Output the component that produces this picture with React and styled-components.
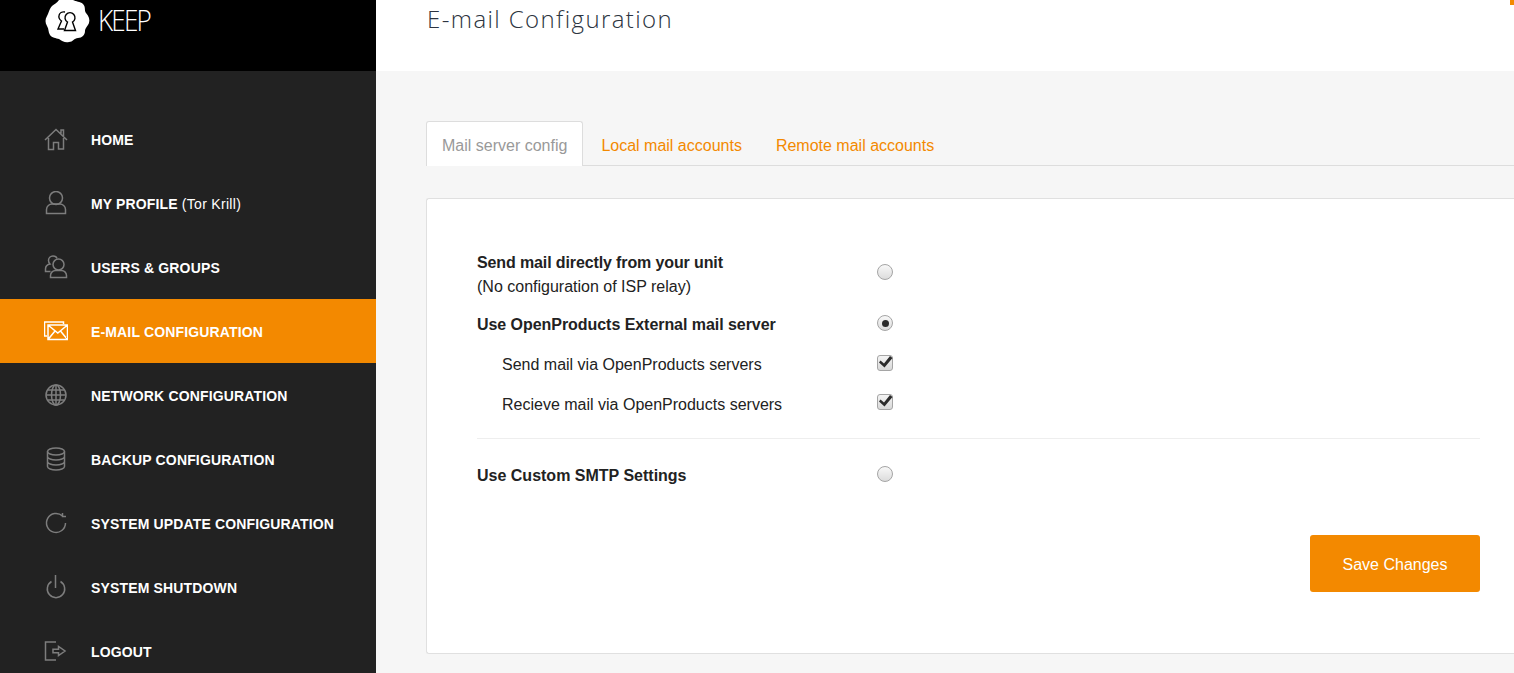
import React from "react";
import styled, { createGlobalStyle } from "styled-components";

const GlobalStyle = createGlobalStyle`
  html, body {
    margin: 0;
    padding: 0;
    height: 100%;
    overflow: hidden;
    background: #f6f6f6;
    font-family: "Liberation Sans", Arial, sans-serif;
  }
`;

const Page = styled.div`
  display: flex;
  width: 1514px;
  height: 673px;
  overflow: hidden;
  position: relative;
`;

const Sidebar = styled.aside`
  width: 376px;
  flex: none;
  background: #222222;
  display: flex;
  flex-direction: column;
`;

const Brand = styled.div`
  height: 71px;
  flex: none;
  background: #000;
  display: flex;
  align-items: flex-start;
  padding-left: 45px;
  gap: 8px;
  overflow: hidden;
`;

const BrandName = styled.span`
  font-family: "Open Sans", sans-serif;
  font-weight: 300;
  font-size: 29px;
  line-height: 40px;
  letter-spacing: -2px;
  color: #fff;
  transform: scaleX(0.9);
  transform-origin: left center;
`;

const Nav = styled.nav`
  padding-top: 36px;
  display: flex;
  flex-direction: column;
`;

const NavItem = styled.a`
  height: 64px;
  display: flex;
  align-items: center;
  padding-left: 44px;
  gap: 23px;
  font-size: 14px;
  font-weight: 700;
  color: #fff;
  background: ${(p) => (p.$active ? "#f38900" : "transparent")};
  svg {
    flex: none;
    fill: none;
    stroke: ${(p) => (p.$active ? "#fff" : "#7d7d7d")};
    stroke-width: 1.5;
  }
`;

const NavLabel = styled.span`
  padding-top: 2px;
  letter-spacing: 0.15px;
`;

const NavNote = styled.span`
  font-weight: 400;
  letter-spacing: 0.3px;
`;

const Main = styled.main`
  flex: 1;
  min-width: 0;
  display: flex;
  flex-direction: column;
`;

const Header = styled.header`
  height: 71px;
  flex: none;
  background: #fff;
  padding-left: 51px;
`;

const Title = styled.h1`
  margin: 0;
  font-family: "Open Sans", sans-serif;
  font-weight: 300;
  font-size: 24px;
  line-height: 38px;
  letter-spacing: 1.4px;
  color: #2c3440;
`;

const Corner = styled.span`
  position: absolute;
  top: 0;
  right: 0;
  width: 4px;
  height: 5px;
  background: #f38900;
`;

const Content = styled.div`
  padding: 50px 0 0 50px;
`;

const Tabs = styled.div`
  display: flex;
  gap: 2px;
  height: 44px;
  border-bottom: 1px solid #ddd;
`;

const Tab = styled.a`
  box-sizing: border-box;
  padding: 3px 15px 0;
  display: flex;
  align-items: center;
  font-size: 16px;
  border: 1px solid ${(p) => (p.$active ? "#ddd" : "transparent")};
  border-bottom: none;
  height: 45px;
  border-radius: 3px 3px 0 0;
  background: ${(p) => (p.$active ? "#fff" : "transparent")};
  color: ${(p) => (p.$active ? "#999" : "#f38900")};
`;

const Panel = styled.section`
  margin-top: 32px;
  background: #fff;
  border: 1px solid #e0e0e0;
  border-right: none;
  border-radius: 3px 0 0 3px;
  padding: 52px 34px 61px 50px;
`;

const Row = styled.div`
  display: grid;
  align-items: center;
  min-height: 40px;
  font-size: 16px;
  color: #222;
  padding-left: ${(p) => (p.$indent ? "25px" : "0")};
  grid-template-columns: ${(p) => (p.$indent ? "375px 16px" : "400px 16px")};
`;

const FirstRow = styled(Row)`
  line-height: 24px;
  padding-bottom: 6px;
`;

const Label = styled.div`
  font-weight: ${(p) => (p.$strong ? 700 : 400)};
  letter-spacing: ${(p) => p.$track || "0"};
`;

const Radio = styled.span`
  box-sizing: border-box;
  width: 16px;
  height: 16px;
  border-radius: 50%;
  border: 1px solid #a5a5a5;
  background: linear-gradient(#f8f8f8, #dcdcdc);
  display: flex;
  align-items: center;
  justify-content: center;
  margin-top: ${(p) => p.$nudge || "-4px"};
  &::after {
    content: "";
    display: ${(p) => (p.$checked ? "block" : "none")};
    width: 7px;
    height: 7px;
    border-radius: 50%;
    background: #2b2b2b;
  }
`;

const Check = styled.span`
  box-sizing: border-box;
  width: 16px;
  height: 16px;
  border-radius: 3px;
  border: 1px solid #a5a5a5;
  background: linear-gradient(#f4f4f4, #d8d8d8);
  display: block;
  margin-top: ${(p) => p.$nudge || "-4px"};
  svg {
    display: block;
    margin: -2px 0 0 0;
  }
`;

const Divider = styled.hr`
  border: none;
  border-top: 1px solid #eee;
  margin: 13px 0 17px;
`;

const Actions = styled.div`
  display: flex;
  justify-content: flex-end;
  margin-top: 39px;
`;

const SaveButton = styled.button`
  width: 170px;
  height: 57px;
  border: none;
  border-radius: 3px;
  padding: 2px 0 0;
  background: #f38900;
  color: #fff;
  font-family: inherit;
  font-size: 16px;
`;

const Cloud = () => (
  <svg width="45" height="44" viewBox="0 0 45 44" style={{ flex: "none" }}>
    <path
      fill="#fff"
      d="M14 0h14c3 2 7 1 10 4 3 3 1 6 3 9 3 3 4 7 3 10-1 3-4 5-4 8 0 4-3 7-7 7-4 0-5 4-9 4-4 1-7-1-10-3-3-1-7-1-9-4-2-3-1-6-3-9-2-3-2-7 0-10 2-3 2-7 5-10 2-2 5-3 7-6z"
    />
    <g fill="none" stroke="#000" strokeWidth="1.4">
      <path d="M19.500 30.500l3-8.500a5 5 0 1 1 5 0l3 8.500z" />
      <path d="M19 29h-6l3.500-8c-2-1.500-3-3.500-2.500-5.500.5-2.500 3-4 6-3.500" />
    </g>
  </svg>
);

const HomeIcon = () => (
  <svg width="24" height="24" viewBox="0 0 24 24">
    <path d="M1 13L12 2.500 23 13M17 6.500V3h2.500v6M4.500 11v11.500h5V15.500h5v6.500h5V11" />
  </svg>
);

const ProfileIcon = () => (
  <svg width="24" height="24" viewBox="0 0 24 24">
    <circle cx="12" cy="7" r="6.500" />
    <path d="M2.500 22.500v-4c0-3.500 3-5.500 5.500-5.500h8c2.500 0 5.500 2 5.500 5.500v4z" />
  </svg>
);

const UsersIcon = () => (
  <svg width="24" height="24" viewBox="0 0 24 24">
    <circle cx="14.500" cy="9.500" r="5.500" />
    <path d="M6.500 22.500v-2c0-3 2.500-5 5-5h6c2.500 0 5 2 5 5v2z" />
    <path d="M13 3.500C12.500 1.500 10.500 1 9 1 6.500 1 4.500 3 4.500 5.500c0 1.500.5 2.500 1.500 3.500-2.500.5-4.500 2.500-4.500 5v2.500h5" />
  </svg>
);

const MailIcon = () => (
  <svg width="24" height="24" viewBox="0 0 24 24">
    <path d="M3 17H.5V3h19v2" />
    <path d="M4 6h19.500v14.500H4zM4 6l9.800 8L23.500 6M4 20.500l7-8.500M23.500 20.500l-7-8.500" />
  </svg>
);

const GlobeIcon = () => (
  <svg width="24" height="24" viewBox="0 0 24 24">
    <circle cx="12" cy="12" r="10" />
    <ellipse cx="12" cy="12" rx="4.500" ry="10" />
    <path d="M12 2v20M2 12h20M3.500 7h17M3.500 17h17" />
  </svg>
);

const DatabaseIcon = () => (
  <svg width="24" height="24" viewBox="0 0 24 24">
    <ellipse cx="12" cy="4.500" rx="8.500" ry="3.500" />
    <path d="M3.500 4.500v15c0 2 4 3.500 8.500 3.500s8.500-1.500 8.500-3.500v-15M3.500 9.500c0 2 4 3.500 8.500 3.500s8.500-1.500 8.500-3.500M3.500 14.500c0 2 4 3.500 8.500 3.500s8.500-1.500 8.500-3.500" />
  </svg>
);

const RefreshIcon = () => (
  <svg width="24" height="24" viewBox="0 0 24 24">
    <path d="M21.500 12a9.500 9.500 0 1 1-3-7M18.500 2v3.500H22" />
  </svg>
);

const PowerIcon = () => (
  <svg width="24" height="24" viewBox="0 0 24 24">
    <path d="M7.500 6.500a8.700 8.700 0 1 0 9 0M11.500 0v13" />
  </svg>
);

const LogoutIcon = () => (
  <svg width="24" height="24" viewBox="0 0 24 24">
    <path d="M12 3H1.500v18H12M14.500 7.500v2.800H9v3.400h5.500v2.800L21 12z" />
  </svg>
);

const Tick = () => (
  <svg width="16" height="16" viewBox="0 0 16 16">
    <path fill="#2b2b2b" d="M2.500 6.500L6 9.500 12 2l2.500 2L6.500 13.500 1 8.500z" />
  </svg>
);

const navItems = [
  { label: "HOME", Icon: HomeIcon },
  { label: "MY PROFILE", note: "(Tor Krill)", Icon: ProfileIcon },
  { label: "USERS & GROUPS", Icon: UsersIcon },
  { label: "E-MAIL CONFIGURATION", Icon: MailIcon, active: true },
  { label: "NETWORK CONFIGURATION", Icon: GlobeIcon },
  { label: "BACKUP CONFIGURATION", Icon: DatabaseIcon },
  { label: "SYSTEM UPDATE CONFIGURATION", Icon: RefreshIcon },
  { label: "SYSTEM SHUTDOWN", Icon: PowerIcon },
  { label: "LOGOUT", Icon: LogoutIcon },
];

export default function App() {
  return (
    <Page>
      <GlobalStyle />
      <Sidebar>
        <Brand>
          <Cloud />
          <BrandName>KEEP</BrandName>
        </Brand>
        <Nav>
          {navItems.map(({ label, note, Icon, active }) => (
            <NavItem key={label} $active={active}>
              <Icon />
              <NavLabel>
                {label} {note && <NavNote>{note}</NavNote>}
              </NavLabel>
            </NavItem>
          ))}
        </Nav>
      </Sidebar>
      <Main>
        <Header>
          <Title>E-mail Configuration</Title>
        </Header>
        <Corner />
        <Content>
          <Tabs>
            <Tab $active>Mail server config</Tab>
            <Tab>Local mail accounts</Tab>
            <Tab>Remote mail accounts</Tab>
          </Tabs>
          <Panel>
            <FirstRow>
              <div>
                <Label $strong $track="-0.12px">Send mail directly from your unit</Label>
                <Label>(No configuration of ISP relay)</Label>
              </div>
              <Radio $nudge="-6px" />
            </FirstRow>
            <Row>
              <Label $strong $track="-0.05px">Use OpenProducts External mail server</Label>
              <Radio $checked />
            </Row>
            <Row $indent>
              <Label>Send mail via OpenProducts servers</Label>
              <Check>
                <Tick />
              </Check>
            </Row>
            <Row $indent>
              <Label>Recieve mail via OpenProducts servers</Label>
              <Check $nudge="-6px">
                <Tick />
              </Check>
            </Row>
            <Divider />
            <Row>
              <Label $strong>Use Custom SMTP Settings</Label>
              <Radio />
            </Row>
            <Actions>
              <SaveButton>Save Changes</SaveButton>
            </Actions>
          </Panel>
        </Content>
      </Main>
    </Page>
  );
}
